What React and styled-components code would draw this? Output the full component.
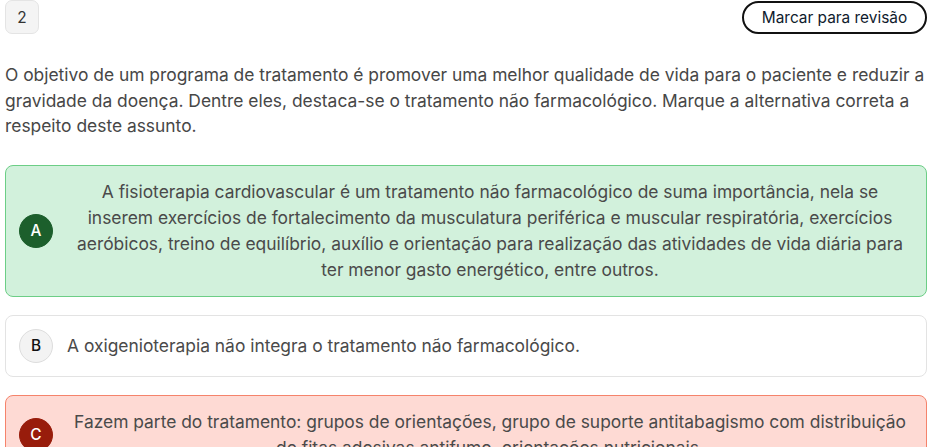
import React from "react";
import styled, { createGlobalStyle } from "styled-components";

const GlobalStyle = createGlobalStyle`
	html, body {
		margin: 0;
		padding: 0;
		background: #ffffff;
	}
	body {
		font-family: Inter, "Noto Sans", sans-serif;
		color: #3f3f3f;
	}
`;

const options = [
	{
		letter: "A",
		status: "correct",
		text:
			"A fisioterapia cardiovascular é um tratamento não farmacológico de suma importância, nela se inserem exercícios de fortalecimento da musculatura periférica e muscular respiratória, exercícios aeróbicos, treino de equilíbrio, auxílio e orientação para realização das atividades de vida diária para ter menor gasto energético, entre outros."
	},
	{
		letter: "B",
		status: "neutral",
		text: "A oxigenioterapia não integra o tratamento não farmacológico."
	},
	{
		letter: "C",
		status: "wrong",
		text:
			"Fazem parte do tratamento: grupos de orientações, grupo de suporte antitabagismo com distribuição de fitas adesivas antifumo, orientações nutricionais."
	}
];

const App = () => {
	return (
		<>
			<GlobalStyle />
			<Page>
				<TopBar>
					<NumberTag>2</NumberTag>
					<ReviewButton>Marcar para revisão</ReviewButton>
				</TopBar>
				<Question>
					O objetivo de um programa de tratamento é promover uma melhor qualidade
					de vida para o paciente e reduzir a gravidade da doença. Dentre eles,
					destaca-se o tratamento não farmacológico. Marque a alternativa correta
					a respeito deste assunto.
				</Question>
				<OptionList>
					{options.map(opt => (
						<Option key={opt.letter} status={opt.status}>
							<Badge status={opt.status}>{opt.letter}</Badge>
							<OptionText centered={opt.status !== "neutral"}>
								{opt.text}
							</OptionText>
						</Option>
					))}
				</OptionList>
			</Page>
		</>
	);
};

export default App;

const palette = {
	correct: { bg: "#d2f1dc", border: "#6cce86", badge: "#1c5f2c", ink: "#ffffff", badgeBorder: "#1c5f2c" },
	wrong: { bg: "#fedad4", border: "#f5836b", badge: "#981c0b", ink: "#ffffff", badgeBorder: "#981c0b" },
	neutral: { bg: "#ffffff", border: "#e3e3e3", badge: "#f3f3f3", ink: "#111111", badgeBorder: "#dddddd" }
};

const Page = styled.div`
	width: 922px;
	padding: 0 21px 0 5px;
`;

const TopBar = styled.div`
	display: flex;
	justify-content: space-between;
	align-items: flex-start;
	height: 35px;
`;

const NumberTag = styled.div`
	box-sizing: border-box;
	width: 34px;
	height: 34px;
	display: flex;
	align-items: center;
	justify-content: center;
	background: #f4f4f4;
	border: 1px solid #e4e4e4;
	border-radius: 7px;
	font-size: 15.4px;
	color: #333;
`;

const ReviewButton = styled.button`
	box-sizing: border-box;
	margin-top: 1px;
	width: 185px;
	height: 33px;
	padding: 0;
	background: #ffffff;
	border: 2px solid #111111;
	border-radius: 999px;
	font-family: Inter, sans-serif;
	font-size: 15.4px;
	color: #0f1b2d;
	cursor: pointer;
`;

const Question = styled.p`
	margin: 27px 0 0;
	font-size: 17.4px;
	line-height: 25.5px;
	color: #474747;
`;

const OptionList = styled.div`
	margin-top: 26px;
	display: flex;
	flex-direction: column;
	gap: 18px;
`;

const Option = styled.div`
	box-sizing: border-box;
	display: flex;
	align-items: center;
	gap: 14px;
	padding: 13px 13px 13px 13px;
	background: ${p => palette[p.status].bg};
	border: 1px solid ${p => palette[p.status].border};
	border-radius: 8px;
`;

const Badge = styled.div`
	box-sizing: border-box;
	flex: 0 0 34px;
	width: 34px;
	height: 34px;
	border-radius: 50%;
	display: flex;
	align-items: center;
	justify-content: center;
	background: ${p => palette[p.status].badge};
	border: 1px solid ${p => palette[p.status].badgeBorder};
	color: ${p => palette[p.status].ink};
	font-size: 15.4px;
	font-weight: 500;
`;

const OptionText = styled.div`
	flex: 1;
	font-size: 17.4px;
	line-height: 26px;
	color: #4a4a4a;
	text-align: ${p => (p.centered ? "center" : "left")};
`;
